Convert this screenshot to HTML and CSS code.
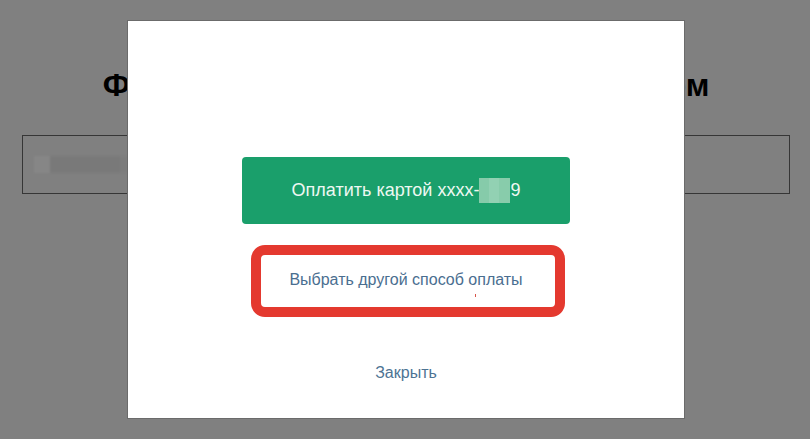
FILE: index.html
```html
<!DOCTYPE html>
<html lang="ru">
<head>
<meta charset="utf-8">
<title>Оплата</title>
<link rel="stylesheet" href="styles.css">
</head>
<body>
<main class="page">
  <h1 class="title">Форма оплаты выбранным способом</h1>
  <div class="field"><span class="field-blur"></span></div>
</main>
<div class="modal">
  <button class="pay-btn" type="button">Оплатить картой xxxx-<span class="mask"></span>9</button>
  <div class="alt-box"><a class="alt-link" href="#">Выбрать другой способ оплаты</a><span class="speck"></span></div>
  <a class="close-link" href="#">Закрыть</a>
</div>
</body>
</html>
```
FILE: styles.css
```css
html, body {
  margin: 0;
  padding: 0;
}
body {
  background: #808080;
  font-family: "Liberation Sans", Arial, sans-serif;
  width: 810px;
  height: 439px;
  overflow: hidden;
  position: relative;
}
.page {
  padding: 0 20px 0 22px;
  display: flex;
  flex-direction: column;
  align-items: center;
}
.title {
  margin: 67px 0 0;
  font-size: 32px;
  font-weight: bold;
  line-height: 37px;
  color: #000;
  white-space: nowrap;
  word-spacing: 1px;
}
.field {
  align-self: stretch;
  margin-top: 30px;
  height: 57px;
  border: 1px solid #363636;
  display: flex;
  align-items: center;
  padding-left: 11px;
  position: relative;
  top: 1px;
}
.field-blur {
  display: block;
  width: 94px;
  height: 17px;
  background: linear-gradient(90deg, #868686 0 16px, #797979 16px 86px, #7c7c7c 86px);
  filter: blur(1px);
}
.modal {
  position: absolute;
  left: 127px;
  top: 20px;
  width: 558px;
  height: 399px;
  box-sizing: border-box;
  background: #fff;
  border: 1px solid #6b6b6b;
  display: flex;
  flex-direction: column;
  align-items: center;
  padding-top: 136px;
}
.pay-btn {
  width: 328px;
  height: 67px;
  border: none;
  border-radius: 4px;
  background: #1a9f6b;
  color: #eef8f2;
  font-family: "Liberation Sans", Arial, sans-serif;
  font-size: 18px;
  display: flex;
  align-items: center;
  justify-content: center;
  padding: 0;
}
.mask {
  display: inline-block;
  width: 31px;
  height: 25px;
  background: linear-gradient(90deg, #86cbaa 0 10px, #92d1b3 10px 20px, #88ccab 20px);
  filter: blur(0.6px);
}
.alt-box {
  position: relative;
  margin-top: 21px;
  margin-left: 4px;
  width: 314px;
  height: 72px;
  box-sizing: border-box;
  border: 10px solid #e4392f;
  border-radius: 14px;
  display: flex;
  align-items: center;
  justify-content: center;
  padding-bottom: 2px;
}
.alt-link {
  color: #4a6e90;
  font-size: 16px;
  text-decoration: none;
  margin-right: 4px;
}
.speck {
  position: absolute;
  left: 214px;
  top: 39px;
  width: 1px;
  height: 3px;
  background: #d8554a;
}
.close-link {
  margin-top: 46px;
  color: #4d7393;
  font-size: 16px;
  line-height: 20px;
  text-decoration: none;
}
```
